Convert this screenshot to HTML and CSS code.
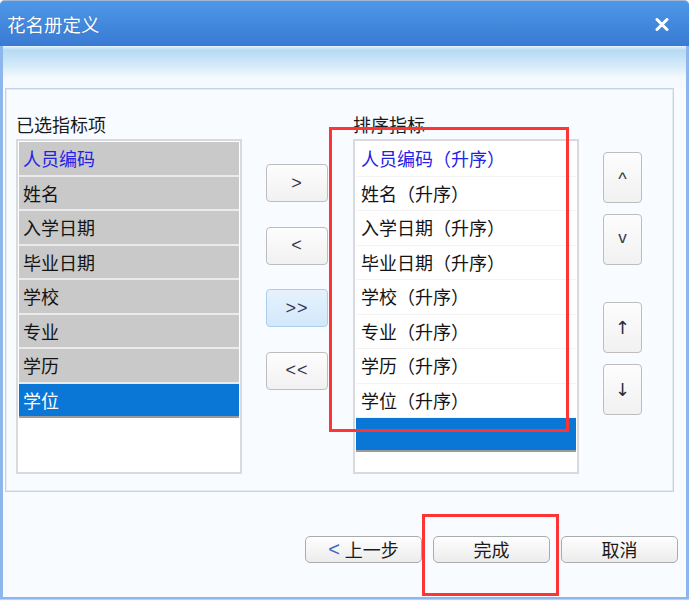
FILE: index.html
```html
<!DOCTYPE html>
<html>
<head>
<meta charset="utf-8">
<link rel="stylesheet" href="styles.css">
</head>
<body>
<div class="window">
  <div class="titlebar">
    <span class="title">花名册定义</span>
    <span class="close"><svg width="14" height="13" viewBox="0 0 14 13"><path d="M2 1.5 L12 11.5 M12 1.5 L2 11.5" stroke="#fff" stroke-width="3" stroke-linecap="round"/></svg></span>
  </div>
  <div class="toolbar"></div>
  <div class="body">
    <div class="panel">
      <div class="col">
        <div class="label">已选指标项</div>
        <div class="listbox">
          <div class="row gray blue-text">人员编码</div>
          <div class="row gray">姓名</div>
          <div class="row gray">入学日期</div>
          <div class="row gray">毕业日期</div>
          <div class="row gray">学校</div>
          <div class="row gray">专业</div>
          <div class="row gray">学历</div>
          <div class="row sel last">学位</div>
        </div>
      </div>
      <div class="midcol">
        <div class="btn mbtn">&gt;</div>
        <div class="btn mbtn">&lt;</div>
        <div class="btn mbtn hover">&gt;&gt;</div>
        <div class="btn mbtn">&lt;&lt;</div>
      </div>
      <div class="col">
        <div class="label">排序指标</div>
        <div class="listbox">
          <div class="row white blue-text">人员编码（升序）</div>
          <div class="row white">姓名（升序）</div>
          <div class="row white">入学日期（升序）</div>
          <div class="row white">毕业日期（升序）</div>
          <div class="row white">学校（升序）</div>
          <div class="row white">专业（升序）</div>
          <div class="row white">学历（升序）</div>
          <div class="row white">学位（升序）</div>
          <div class="row sel last"></div>
        </div>
      </div>
      <div class="rcol">
        <div class="btn rbtn caret">^</div>
        <div class="btn rbtn vee">v</div>
        <div class="btn rbtn arrow up">↑</div>
        <div class="btn rbtn arrow">↓</div>
      </div>
    </div>
    <div class="footer">
      <div class="btn fbtn"><span class="lt">&lt;</span>上一步</div>
      <div class="btn fbtn">完成</div>
      <div class="btn fbtn">取消</div>
    </div>
  </div>
</div>
<div class="mark mark1"></div>
<div class="mark mark2"></div>
</body>
</html>
```

FILE: styles.css
```css
html, body {
  margin: 0;
  padding: 0;
  background: #ffffff;
}
body {
  width: 691px;
  height: 601px;
  position: relative;
  overflow: hidden;
  font-family: "Noto Sans CJK SC", "Noto Sans", sans-serif;
}
.window {
  width: 689px;
  height: 599px;
  box-sizing: border-box;
  border-left: 3px solid #8db6ee;
  border-right: 3px solid #8db6ee;
  border-bottom: 2px solid #8db6ee;
  border-radius: 5px 5px 0 0;
  background: #f8fbff;
  box-shadow: 0 1px 1px #c8c8c8;
  display: flex;
  flex-direction: column;
}
.titlebar {
  height: 46px;
  margin: 0 -3px;
  border-radius: 5px 5px 0 0;
  background: linear-gradient(#4e97e6, #4186dc 60%, #3a7bd2);
  border-top: 1px solid #9fb8d8;
  box-sizing: border-box;
  display: flex;
  align-items: center;
  justify-content: space-between;
  padding: 0 20px 0 7px;
}
.title {
  color: #ffffff;
  font-size: 18.5px;
  line-height: 24px;
  text-shadow: 0 0 1px rgba(20, 60, 140, 0.5);
}
.close {
  display: flex;
  width: 14px;
  height: 13px;
  margin-top: 2px;
}
.toolbar {
  height: 42px;
  background: linear-gradient(#d6ecfa 0, #b6daf3 8%, #d4eaf9 45%, #f4f9fe 75%, #f6faff 100%);
  border-top: 1px solid #e4f2fc;
  box-sizing: border-box;
}
.body {
  flex: 1;
  display: flex;
  flex-direction: column;
  background: #f8fbff;
}
.panel {
  margin-left: 2px;
  width: 669px;
  height: 404px;
  box-sizing: border-box;
  border: 1px solid #c3d2e6;
  box-shadow: inset 0 0 0 1px #e4ecf6;
  padding: 22px 0 0 10px;
  display: flex;
  align-items: flex-start;
}
.col {
  width: 226px;
  display: flex;
  flex-direction: column;
}
.label {
  height: 28px;
  line-height: 26px;
  font-size: 18px;
  color: #1a1a1a;
}
.listbox {
  height: 335px;
  box-sizing: border-box;
  border: 2px solid #d9dadd;
  background: #ffffff;
  padding: 1px;
}
.row {
  height: 34.5px;
  box-sizing: border-box;
  font-size: 18px;
  line-height: 32px;
  padding-left: 4px;
  color: #141414;
  white-space: nowrap;
}
.row.gray {
  background: #c9c9c9;
  border-bottom: 2px solid #ebebeb;
}
.row.white {
  background: #ffffff;
  border-bottom: 1px solid #f3f3f3;
  padding-left: 5px;
}
.row.sel {
  background: #0a76d6;
  color: #ffffff;
  border-bottom: 2px solid #9a9a9a;
  height: 34px;
}
.blue-text {
  color: #2323e8;
}
.midcol {
  width: 62px;
  margin: 53px 25px 0 24px;
  display: flex;
  flex-direction: column;
  gap: 24.5px;
}
.btn {
  box-sizing: border-box;
  border: 1px solid #bdbdbd;
  border-radius: 4px;
  background: linear-gradient(#fdfdfd, #f1f1f1);
  display: flex;
  align-items: center;
  justify-content: center;
  color: #363650;
}
.mbtn {
  height: 38px;
  font-family: "Liberation Sans", sans-serif;
  font-size: 18px;
  letter-spacing: 1px;
}
.mbtn.hover {
  background: linear-gradient(#e6f2fd, #d4e8fb);
  border-color: #a9cdef;
}
.rcol {
  width: 39px;
  margin: 41px 0 0 24px;
  display: flex;
  flex-direction: column;
}
.rbtn {
  height: 51px;
  font-family: "Liberation Sans", sans-serif;
  font-size: 16px;
}
.rbtn + .rbtn {
  margin-top: 11px;
}
.rbtn.up {
  margin-top: 37px;
}
.caret {
  font-size: 18px;
  padding-top: 4px;
}
.vee {
  font-size: 17px;
  padding-bottom: 4px;
}
.arrow {
  font-family: "DejaVu Sans", sans-serif;
  font-size: 18px;
  color: #2a2a3a;
}
.footer {
  display: flex;
  justify-content: flex-end;
  gap: 11px;
  padding: 44px 8px 0 0;
}
.fbtn {
  width: 117px;
  height: 27px;
  border-color: #ababab;
  border-radius: 5px;
  background: linear-gradient(#fefefe, #ececec);
  font-size: 18px;
  color: #1a1a1a;
  line-height: 25px;
}
.lt {
  font-family: "Liberation Sans", sans-serif;
  font-size: 20px;
  color: #3a68c4;
  margin-right: 5px;
}
.mark {
  position: absolute;
  box-sizing: border-box;
  border: 3px solid #ff3434;
}
.mark1 {
  left: 329px;
  top: 127px;
  width: 240px;
  height: 305px;
}
.mark2 {
  left: 422px;
  top: 514px;
  width: 137px;
  height: 82px;
}
```
